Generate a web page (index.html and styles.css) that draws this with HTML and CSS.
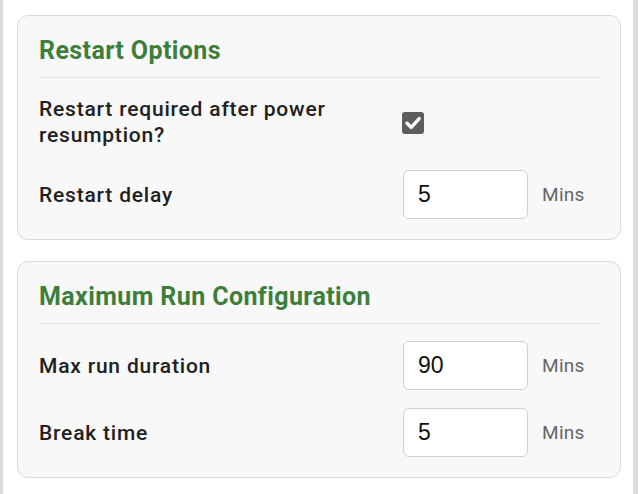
FILE: index.html
```html
<!DOCTYPE html>
<html lang="en">
<head>
<meta charset="utf-8">
<title>Restart Options</title>
<link rel="stylesheet" href="styles.css">
</head>
<body>
<div class="page">
  <section class="card">
    <h2 class="card-title">Restart Options</h2>
    <div class="rows">
      <div class="row row-check">
        <span class="label">Restart required after power resumption?</span>
        <span class="checkbox" role="checkbox" aria-checked="true">
          <svg viewBox="0 0 22 22" width="22" height="22"><path d="M5 11.2 L9.2 15.4 L17.2 6.6" fill="none" stroke="#fff" stroke-width="3.4" stroke-linecap="round" stroke-linejoin="round"/></svg>
        </span>
      </div>
      <div class="row">
        <span class="label">Restart delay</span>
        <input class="field" type="text" value="5">
        <span class="unit">Mins</span>
      </div>
    </div>
  </section>
  <section class="card">
    <h2 class="card-title">Maximum Run Configuration</h2>
    <div class="rows">
      <div class="row">
        <span class="label">Max run duration</span>
        <input class="field" type="text" value="90">
        <span class="unit">Mins</span>
      </div>
      <div class="row">
        <span class="label">Break time</span>
        <input class="field" type="text" value="5">
        <span class="unit">Mins</span>
      </div>
    </div>
  </section>
</div>
</body>
</html>
```

FILE: styles.css
```css
html, body {
  margin: 0;
  padding: 0;
  background: #ffffff;
}
body {
  font-family: Roboto, "Noto Sans", sans-serif;
  color: #212121;
}
.page {
  box-sizing: border-box;
  min-height: 494px;
  border-left: 3px solid #dcdcdc;
  border-right: 5px solid #dcdcdc;
  padding: 15px 12px 0 14px;
  display: flex;
  flex-direction: column;
  gap: 21px;
}
.card {
  background: #f8f8f8;
  border: 1px solid #dadada;
  border-radius: 11px;
  padding: 20px 20px 20px 21px;
}
.card-title {
  margin: 0;
  font-size: 25px;
  line-height: 30px;
  font-weight: 700;
  letter-spacing: 0.4px;
  color: #3e7e3b;
  padding-bottom: 11px;
  border-bottom: 1px solid #e2e2e2;
}
.rows {
  display: flex;
  flex-direction: column;
  gap: 18px;
  padding-top: 17px;
}
.row {
  display: grid;
  grid-template-columns: 364px 125px auto;
  align-items: center;
  min-height: 49px;
}
.row-check {
  align-items: start;
  min-height: 57px;
}
.label {
  font-size: 21px;
  line-height: 26px;
  font-weight: 500;
  letter-spacing: 0.8px;
  color: #212121;
  padding-right: 20px;
}
.row-check .label {
  padding-top: 1px;
}
.checkbox {
  display: flex;
  width: 22px;
  height: 22px;
  margin-top: 17px;
  margin-left: -1px;
  background: #5d5d5d;
  border-radius: 3px;
}
.field {
  box-sizing: border-box;
  width: 125px;
  height: 49px;
  margin: 0;
  border: 1px solid #d0d0d0;
  border-radius: 6px;
  background: #ffffff;
  padding: 0 14px;
  font-family: "Liberation Sans", Arial, sans-serif;
  font-size: 23px;
  color: #111111;
  outline: none;
}
.unit {
  margin-left: 14px;
  font-family: Roboto, sans-serif;
  font-size: 19px;
  color: #666666;
  letter-spacing: 0.3px;
}
```
